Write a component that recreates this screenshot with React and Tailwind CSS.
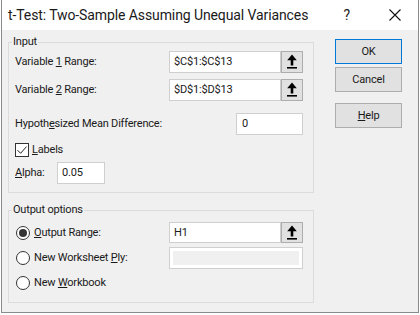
import React from 'react';

// small up-arrow picker button used next to range inputs
function RefButton() {
  return (
    <div className="w-[22px] h-full border border-[#adadad] bg-[#e1e1e1] flex items-center justify-center">
      <svg width="20" height="20" viewBox="0 0 20 20">
        <polygon points="10,2.5 14.8,8.2 11.3,8.2 11.3,13.6 8.7,13.6 8.7,8.2 5.2,8.2" fill="#000" />
        <rect x="5" y="15" width="10" height="1.6" fill="#000" />
      </svg>
    </div>
  );
}

function Radio({ checked }) {
  return (
    <div className="w-[14px] h-[14px] rounded-full border border-[#333] bg-white flex items-center justify-center">
      {checked && <div className="w-[8px] h-[8px] rounded-full bg-[#333]" />}
    </div>
  );
}

function Btn({ children, def }) {
  return (
    <div
      className={
        def
          ? 'w-[67px] h-[25px] border-[1.5px] border-[#0078d7] bg-[#e1e1e1] flex items-center justify-center'
          : 'w-[67px] h-[25px] border border-[#adadad] bg-[#e1e1e1] flex items-center justify-center'
      }
    >
      {children}
    </div>
  );
}

export default function App() {
  return (
    <div className="w-[420px] h-[315px] bg-white font-['Roboto',sans-serif] text-[11px] tracking-[-0.2px] text-[#1a1a1a] leading-[16px]">
      <div className="ml-[1px] w-[418px] h-[313px] border-x border-b border-[#8a8a8a] flex flex-col">
        {/* title bar */}
        <div className="h-[30px] shrink-0 bg-white flex items-center pl-[6px] text-[14px] tracking-[-0.1px] whitespace-nowrap">
          <span>t-Test: Two-Sample Assuming Unequal Variances</span>
          <span className="ml-auto mr-[38px]">?</span>
          <svg width="14" height="14" viewBox="0 0 14 14" className="mr-[16px]">
            <path d="M1.5 1.5 L12.5 12.5 M12.5 1.5 L1.5 12.5" stroke="#111" strokeWidth="1.1" />
          </svg>
        </div>

        <div className="flex-1 bg-[#f0f0f0] flex pl-[6px]">
          {/* left: group boxes */}
          <div className="w-[306px] flex flex-col pt-[4px]">
            <fieldset className="h-[159px] border border-[#dcdcdc]">
              <legend className="ml-[3px] px-[1px]">Input</legend>
              <div className="pl-[6px] pr-[10px] flex flex-col">
                <div className="mt-[1px] h-[22px] flex items-center">
                  <span className="flex-1">
                    Variable <span className="underline">1</span> Range:
                  </span>
                  <div className="w-[112px] h-full border border-[#cfcfcf] bg-white flex items-center pl-[4px]">$C$1:$C$13</div>
                  <RefButton />
                </div>
                <div className="mt-[6px] h-[22px] flex items-center">
                  <span className="flex-1">
                    Variable <span className="underline">2</span> Range:
                  </span>
                  <div className="w-[112px] h-full border border-[#cfcfcf] bg-white flex items-center pl-[4px]">$D$1:$D$13</div>
                  <RefButton />
                </div>
                <div className="mt-[12px] h-[22px] flex items-center">
                  <span className="flex-1">
                    Hypoth<span className="underline">e</span>sized Mean Difference:
                  </span>
                  <div className="w-[67px] h-full border border-[#cfcfcf] bg-white flex items-center pl-[5px]">0</div>
                </div>
                <div className="mt-[7px] h-[16px] flex items-center">
                  <div className="w-[14px] h-[14px] border border-[#333] bg-white flex items-center justify-center">
                    <svg width="12" height="12" viewBox="0 0 12 12">
                      <path d="M1.5 6.2 L4.6 9.3 L10.5 2.6" fill="none" stroke="#222" strokeWidth="1" />
                    </svg>
                  </div>
                  <span className="ml-[3px]">
                    <span className="underline">L</span>abels
                  </span>
                </div>
                <div className="mt-[4px] h-[22px] flex items-center">
                  <span className="w-[42px]">
                    <span className="underline">A</span>lpha:
                  </span>
                  <div className="w-[48px] h-full border border-[#cfcfcf] bg-white flex items-center pl-[4px]">0.05</div>
                </div>
              </div>
            </fieldset>

            <fieldset className="mt-[9px] h-[101px] border border-[#dcdcdc]">
              <legend className="ml-[3px] px-[1px]">Output options</legend>
              <div className="pl-[7px] pr-[10px] flex flex-col">
                <div className="mt-[4px] h-[21px] flex items-center">
                  <Radio checked />
                  <span className="ml-[4px] flex-1">
                    <span className="underline">O</span>utput Range:
                  </span>
                  <div className="w-[112px] h-full border border-[#cfcfcf] bg-white flex items-center pl-[4px]">H1</div>
                  <RefButton />
                </div>
                <div className="mt-[4px] h-[22px] flex items-center">
                  <Radio />
                  <span className="ml-[4px] flex-1">
                    New Worksheet <span className="underline">P</span>ly:
                  </span>
                  <div className="w-[134px] h-full border border-[#cfcfcf] bg-white p-[3px]">
                    <div className="w-full h-full bg-[#f0f0f0]" />
                  </div>
                </div>
                <div className="mt-[6px] h-[16px] flex items-center">
                  <Radio />
                  <span className="ml-[4px]">
                    New <span className="underline">W</span>orkbook
                  </span>
                </div>
              </div>
            </fieldset>
          </div>

          {/* right: buttons */}
          <div className="ml-[21px] pt-[9px] flex flex-col">
            <Btn def>OK</Btn>
            <div className="mt-[3px]">
              <Btn>Cancel</Btn>
            </div>
            <div className="mt-[11px]">
              <Btn>
                <span>
                  <span className="underline">H</span>elp
                </span>
              </Btn>
            </div>
          </div>
        </div>
      </div>
    </div>
  );
}
